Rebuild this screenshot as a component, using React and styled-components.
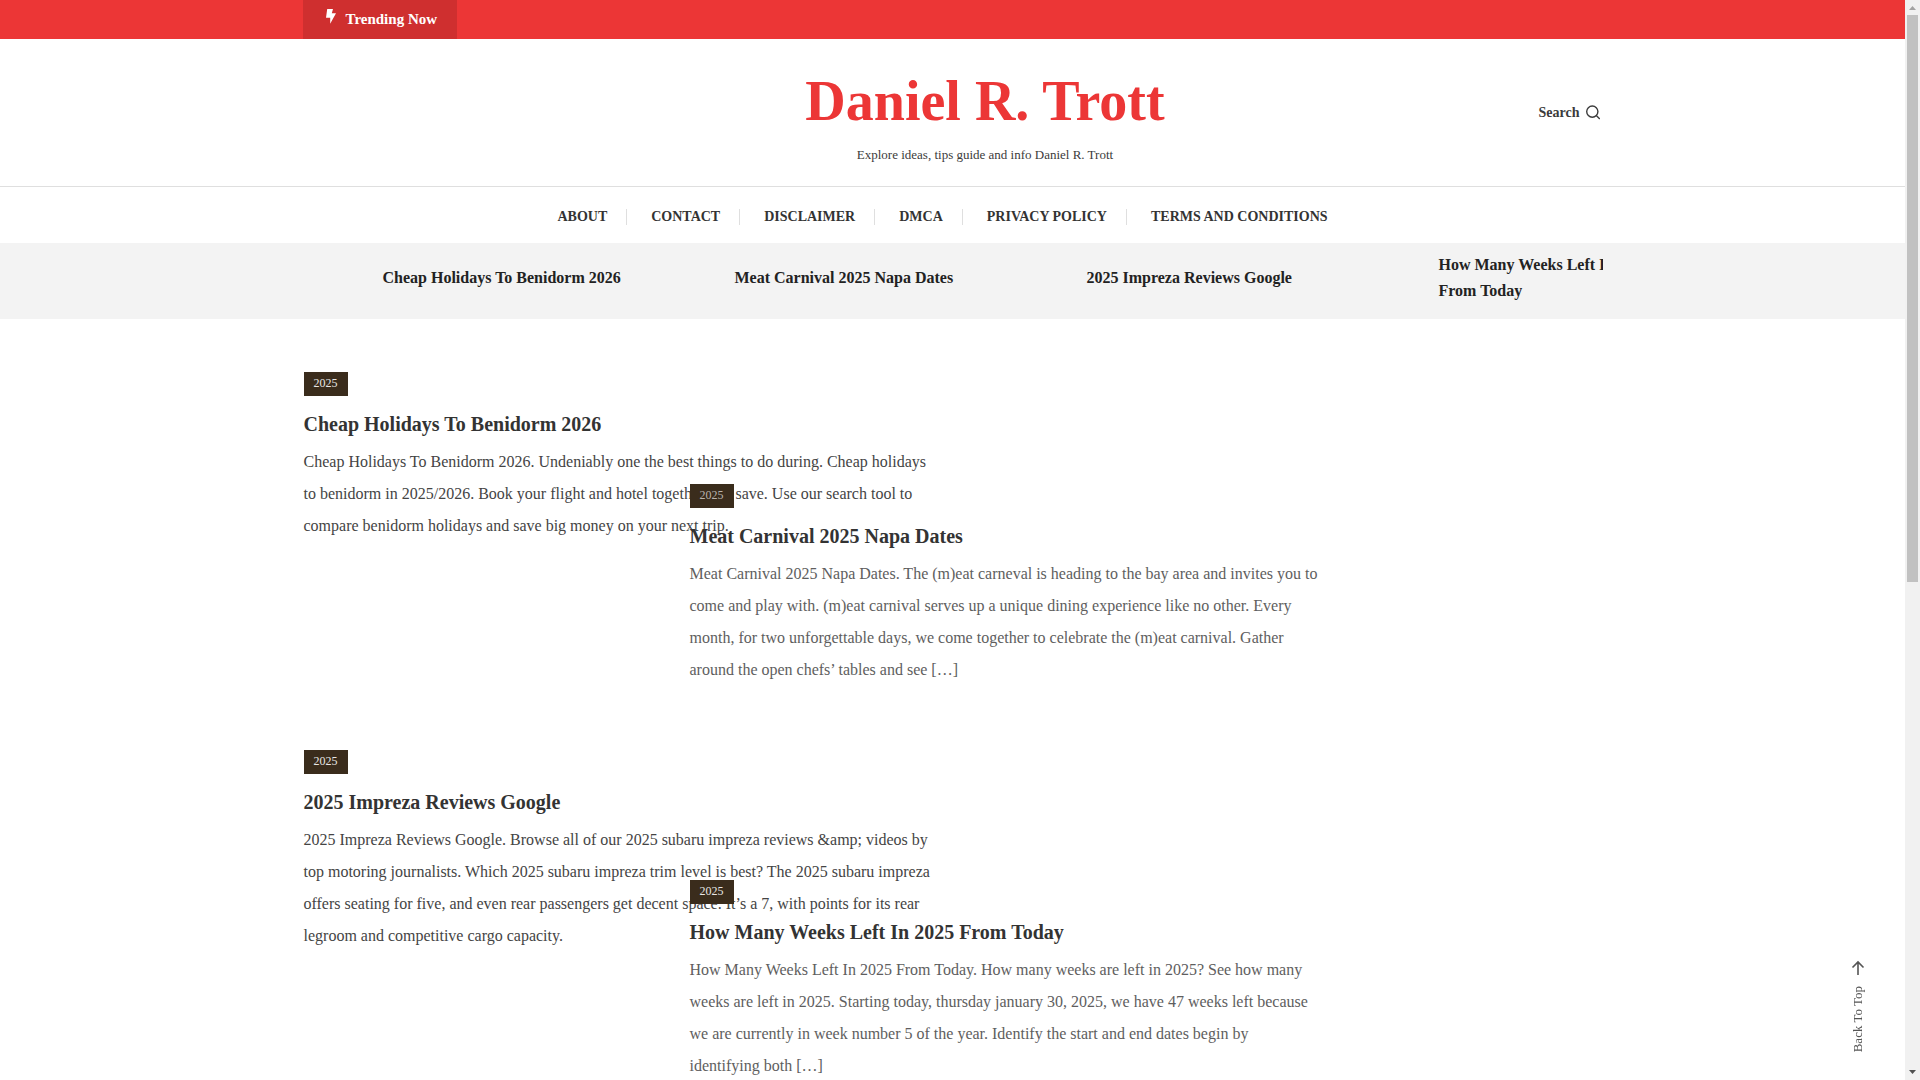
import React from "react";
import styled, { createGlobalStyle } from "styled-components";

const GlobalStyle = createGlobalStyle`
  * { box-sizing: border-box; }
  body {
    margin: 0;
    background: #ffffff;
    color: #3b3b3b;
    font-family: "Liberation Serif", "Times New Roman", serif;
    font-size: 16px;
  }
  h1, h2, h3, p, ul { margin: 0; padding: 0; }
  ul { list-style: none; }
  a { color: inherit; text-decoration: none; }
`;

const Shell = styled.div`
  display: flex;
  height: 100vh;
  overflow: hidden;
`;

const Page = styled.div`
  flex: 1;
  min-width: 0;
`;

const Container = styled.div`
  width: 100%;
  max-width: 1300px;
  margin: 0 auto;
`;

const TopBar = styled.div`
  background: #ec3636;
`;

const Trending = styled.div`
  display: inline-flex;
  align-items: flex-start;
  gap: 9px;
  height: 39px;
  padding: 8px 20px 0 22px;
  background: #cf2f2f;
  color: #ffffff;
  font-size: 15px;
  font-weight: 700;
  line-height: 22px;
  vertical-align: top;
`;

const Header = styled.header`
  border-bottom: 1px solid #dfdfdf;
`;

const HeaderRow = styled(Container)`
  display: grid;
  grid-template-columns: 1fr auto 1fr;
  align-items: center;
  height: 147px;
  padding-left: 65px;
`;

const Brand = styled.div`
  padding-top: 8px;
  text-align: center;
`;

const SiteTitle = styled.h1`
  color: #ec3636;
  font-size: 56px;
  font-weight: 700;
  line-height: 76px;
`;

const Tagline = styled.p`
  font-size: 13px;
  line-height: 32px;
`;

const SearchButton = styled.button`
  display: flex;
  align-items: center;
  justify-self: end;
  gap: 6px;
  padding: 0;
  margin-right: 3px;
  border: 0;
  background: none;
  color: #3b3b3b;
  font: 700 14px/20px "Liberation Serif", serif;
`;

const Nav = styled.nav`
  display: flex;
  justify-content: center;
  height: 56px;
  padding-top: 22px;
`;

const NavList = styled.ul`
  display: flex;
  gap: 4px;
  padding-right: 21px;
`;

const NavItem = styled.li`
  height: 16px;
  padding: 0 19px 0 20px;
  border-right: 1px solid #dfdfdf;
  color: #333333;
  font-size: 14px;
  font-weight: 700;
  line-height: 16px;
  text-transform: uppercase;
  &:last-child { border-right: 0; }
`;

const TickerBar = styled.section`
  background: #f3f3f3;
`;

const Ticker = styled(Container)`
  display: flex;
  height: 76px;
  overflow: hidden;
`;

const TickerItem = styled.article`
  display: flex;
  align-items: center;
  flex: 0 0 352px;
  padding: 0 20px 6px 80px;
`;

const TickerTitle = styled.h3`
  color: #222222;
  font-size: 16px;
  font-weight: 700;
  line-height: 26px;
`;

const Feed = styled(Container)`
  display: grid;
  grid-template-columns: 386px 244px 386px;
  padding: 53px 0 0 1px;
`;

const Column = styled.div`
  display: flex;
  flex-direction: column;
  grid-row: 1;
  grid-column: ${(p) => (p.$side === "left" ? "1 / 3" : "2 / 4")};
  padding-top: ${(p) => (p.$side === "left" ? 0 : 112)}px;
`;

const Post = styled.article`
  height: ${(p) => (p.$side === "left" ? 378 : 396)}px;
  color: ${(p) => (p.$side === "left" ? "#444444" : "#5e5e5e")};
`;

const Badge = styled.a`
  display: block;
  width: fit-content;
  height: 24px;
  padding: 0 10px;
  background: #3a2c1c;
  color: ${(p) => (p.$faded ? "#b9b3ac" : "#e8e6e4")};
  font-size: 12px;
  line-height: 22px;
`;

const PostTitle = styled.h2`
  margin-top: 12px;
  color: #333333;
  font-size: 20px;
  font-weight: 700;
  line-height: 32px;
`;

const Excerpt = styled.p`
  margin-top: 6px;
  line-height: 32px;
`;

const BackToTop = styled.a`
  position: fixed;
  right: 53px;
  bottom: 28px;
  display: flex;
  flex-direction: column;
  align-items: center;
  gap: 10px;
  color: #555555;
  font-size: 13px;
  line-height: 18px;
`;

const Vertical = styled.span`
  writing-mode: vertical-rl;
  transform: rotate(180deg);
`;

const ScrollRail = styled.div`
  display: flex;
  flex-direction: column;
  flex: 0 0 15px;
  background: #f1f1f1;
`;

const ScrollArrow = styled.svg`
  display: block;
  width: 15px;
  height: 15px;
`;

const ScrollTrack = styled.div`
  flex: 1;
  padding: 0 2px;
`;

const ScrollThumb = styled.div`
  height: 54%;
  background: #c1c1c1;
`;

const links = ["About", "Contact", "Disclaimer", "DMCA", "Privacy Policy", "Terms and Conditions"];

const headlines = [
  "Cheap Holidays To Benidorm 2026",
  "Meat Carnival 2025 Napa Dates",
  "2025 Impreza Reviews Google",
  "How Many Weeks Left In 2025 From Today",
];

const posts = {
  left: [
    {
      title: "Cheap Holidays To Benidorm 2026",
      text: "Cheap Holidays To Benidorm 2026. Undeniably one the best things to do during. Cheap holidays to benidorm in 2025/2026. Book your flight and hotel together and save. Use our search tool to compare benidorm holidays and save big money on your next trip.",
    },
    {
      title: "2025 Impreza Reviews Google",
      text: "2025 Impreza Reviews Google. Browse all of our 2025 subaru impreza reviews &amp; videos by top motoring journalists. Which 2025 subaru impreza trim level is best? The 2025 subaru impreza offers seating for five, and even rear passengers get decent space. It’s a 7, with points for its rear legroom and competitive cargo capacity.",
    },
  ],
  right: [
    {
      faded: true,
      title: "Meat Carnival 2025 Napa Dates",
      text: "Meat Carnival 2025 Napa Dates. The (m)eat carneval is heading to the bay area and invites you to come and play with. (m)eat carnival serves up a unique dining experience like no other. Every month, for two unforgettable days, we come together to celebrate the (m)eat carnival. Gather around the open chefs’ tables and see […]",
    },
    {
      title: "How Many Weeks Left In 2025 From Today",
      text: "How Many Weeks Left In 2025 From Today. How many weeks are left in 2025? See how many weeks are left in 2025. Starting today, thursday january 30, 2025, we have 47 weeks left because we are currently in week number 5 of the year. Identify the start and end dates begin by identifying both […]",
    },
  ],
};

function PostColumn({ side }) {
  return (
    <Column $side={side}>
      {posts[side].map((post) => (
        <Post key={post.title} $side={side}>
          <Badge href="#2025" $faded={post.faded}>2025</Badge>
          <PostTitle><a href="#post">{post.title}</a></PostTitle>
          <Excerpt>{post.text}</Excerpt>
        </Post>
      ))}
    </Column>
  );
}

export default function App() {
  return (
    <>
      <GlobalStyle />
      <Shell>
        <Page>
          <TopBar>
            <Container>
              <Trending>
                <svg width="12" height="16" viewBox="0 0 12 16" fill="#fff" aria-hidden="true">
                  <path d="M2.200 1h5.800L6.800 5.200H11L5.200 15.800V9.800H1z" />
                </svg>
                <span>Trending Now</span>
              </Trending>
            </Container>
          </TopBar>
          <Header>
            <HeaderRow>
              <span />
              <Brand>
                <SiteTitle><a href="#home">Daniel R. Trott</a></SiteTitle>
                <Tagline>Explore ideas, tips guide and info Daniel R. Trott</Tagline>
              </Brand>
              <SearchButton type="button">
                Search
                <svg width="14" height="16" viewBox="0 0 14 16" fill="none" stroke="currentColor" strokeWidth="1.4" aria-hidden="true">
                  <circle cx="6.300" cy="6.600" r="5.600" />
                  <path d="M10.300 10.600 13.800 14" />
                </svg>
              </SearchButton>
            </HeaderRow>
          </Header>
          <Nav>
            <NavList>
              {links.map((l) => (
                <NavItem key={l}><a href="#page">{l}</a></NavItem>
              ))}
            </NavList>
          </Nav>
          <TickerBar>
            <Ticker>
              {headlines.map((h) => (
                <TickerItem key={h}>
                  <TickerTitle><a href="#post">{h}</a></TickerTitle>
                </TickerItem>
              ))}
            </Ticker>
          </TickerBar>
          <Feed as="main">
            <PostColumn side="left" />
            <PostColumn side="right" />
          </Feed>
        </Page>
        <ScrollRail aria-hidden="true">
          <ScrollArrow viewBox="0 0 15 15"><path d="M4 10h7L7.500 6z" fill="#a3a3a3" /></ScrollArrow>
          <ScrollTrack><ScrollThumb /></ScrollTrack>
          <ScrollArrow viewBox="0 0 15 15"><path d="M4 5h7L7.500 9z" fill="#505050" /></ScrollArrow>
        </ScrollRail>
      </Shell>
      <BackToTop href="#top">
        <svg width="14" height="16" viewBox="0 0 14 16" fill="none" stroke="currentColor" strokeWidth="1.6" aria-hidden="true">
          <path d="M7 15V2M1.500 7.500 7 2l5.500 5.500" />
        </svg>
        <Vertical>Back To Top</Vertical>
      </BackToTop>
    </>
  );
}
